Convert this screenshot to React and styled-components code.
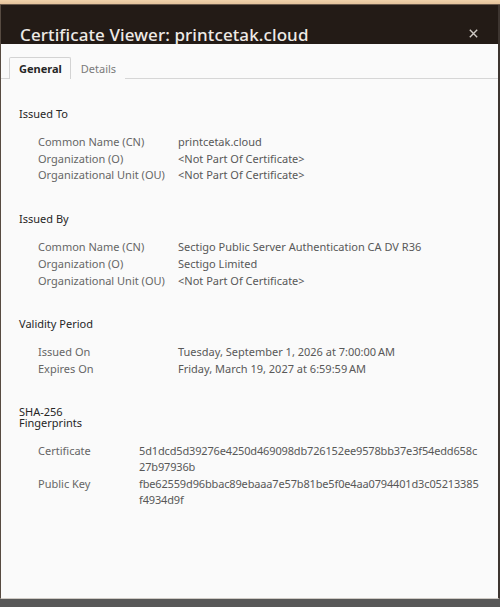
import React from "react";
import styled, { createGlobalStyle } from "styled-components";

const Global = createGlobalStyle`
  html, body { margin: 0; padding: 0; background: #585858; }
  * { box-sizing: border-box; }
`;

const Frame = styled.div`
  width: 500px;
  height: 607px;
  display: flex;
  flex-direction: column;
  background: #585858;
  font-family: "Noto Sans", "Open Sans", sans-serif;
`;

const TopStrip = styled.div`
  height: 5px;
  background: linear-gradient(#f0d2ab, #e4c29b);
  border-bottom: 1px solid #6b5a4b;
  flex: none;
`;

const Window = styled.div`
  flex: none;
  height: 594px;
  display: flex;
  flex-direction: column;
  border-left: 1px solid #574b41;
  border-right: 2px solid #3d3530;
  border-bottom: 1px solid #cfcac4;
`;

const TitleBar = styled.div`
  height: 39px;
  flex: none;
  background: #231b16;
  display: flex;
  align-items: flex-end;
  justify-content: space-between;
  padding: 0 20px 0 19px;
`;

const Title = styled.h1`
  margin: 0;
  font-size: 17px;
  font-weight: 500;
  color: #eeeae6;
  line-height: 18px;
  letter-spacing: 0.1px;
`;

const CloseButton = styled.button`
  border: none;
  background: none;
  padding: 0;
  margin-bottom: 6px;
  width: 9px;
  height: 9px;
  display: flex;
  color: #cfcac5;
`;

const Body = styled.div`
  flex: 1;
  background: #fafafa;
  display: flex;
  flex-direction: column;
`;

const TabBar = styled.div`
  display: flex;
  padding: 13px 0 0 8px;
  border-bottom: 1px solid #d6d6d6;
`;

const Tab = styled.div`
  height: 22px;
  padding: 0 8px 0 9px;
  display: flex;
  align-items: center;
  font-size: 11px;
  font-weight: ${(p) => (p.$active ? 700 : 400)};
  color: ${(p) => (p.$active ? "#262626" : "#7a7a7a")};
  border: 1px solid ${(p) => (p.$active ? "#d3d3d3" : "transparent")};
  border-bottom: none;
  border-radius: 2px 2px 0 0;
  margin-bottom: -1px;
  background: #fafafa;
`;

const Content = styled.div`
  display: flex;
  flex-direction: column;
  padding: 26px 0 0 18px;
  gap: 26px;
`;

const Section = styled.section`
  display: flex;
  flex-direction: column;
  gap: ${(p) => (p.$tight ? 14 : 12)}px;
`;

const Heading = styled.h2`
  margin: 0;
  font-size: 11px;
  font-weight: 400;
  color: #262626;
  line-height: ${(p) => (p.$tight ? "11.5px" : "17px")};
  max-width: ${(p) => (p.$tight ? "70px" : "none")};
  padding-top: ${(p) => (p.$tight ? 2 : 0)}px;
`;

const Rows = styled.div`
  display: grid;
  grid-template-columns: ${(p) => p.$labelWidth}px 1fr;
  padding-left: 19px;
  font-size: 11px;
  line-height: ${(p) => (p.$tight ? "16.5px" : "16.7px")};
`;

const Label = styled.div`
  color: #666666;
`;

const Value = styled.div`
  color: #585858;
  letter-spacing: ${(p) => (p.$compact ? "-0.15px" : "normal")};
`;

const Line = styled.span`
  display: block;
`;

const CloseIcon = () => (
  <svg width="9" height="9" viewBox="0 0 9 9">
    <path d="M0.8 0.8 L8.2 8.2 M8.2 0.8 L0.8 8.2" stroke="currentColor" strokeWidth="1.4" />
  </svg>
);

const NP = "<Not Part Of Certificate>";

const sections = [
  {
    title: "Issued To",
    labelWidth: 140,
    rows: [
      ["Common Name (CN)", ["printcetak.cloud"]],
      ["Organization (O)", [NP]],
      ["Organizational Unit (OU)", [NP]],
    ],
  },
  {
    title: "Issued By",
    labelWidth: 140,
    rows: [
      ["Common Name (CN)", ["Sectigo Public Server Authentication CA DV R36"]],
      ["Organization (O)", ["Sectigo Limited"]],
      ["Organizational Unit (OU)", [NP]],
    ],
  },
  {
    title: "Validity Period",
    labelWidth: 140,
    rows: [
      ["Issued On", ["Tuesday, September 1, 2026 at 7:00:00\u202FAM"]],
      ["Expires On", ["Friday, March 19, 2027 at 6:59:59\u202FAM"]],
    ],
  },
  {
    title: "SHA-256 Fingerprints",
    tight: true,
    labelWidth: 101,
    rows: [
      ["Certificate", ["5d1dcd5d39276e4250d469098db726152ee9578bb37e3f54edd658c", "27b97936b"]],
      ["Public Key", ["fbe62559d96bbac89ebaaa7e57b81be5f0e4aa0794401d3c05213385", "f4934d9f"]],
    ],
  },
];

export default function App() {
  return (
    <>
      <Global />
      <Frame>
        <TopStrip />
        <Window>
          <TitleBar>
            <Title>Certificate Viewer: printcetak.cloud</Title>
            <CloseButton aria-label="Close">
              <CloseIcon />
            </CloseButton>
          </TitleBar>
          <Body>
            <TabBar>
              <Tab $active>General</Tab>
              <Tab>Details</Tab>
            </TabBar>
            <Content>
              {sections.map((s) => (
                <Section key={s.title} $tight={s.tight}>
                  <Heading $tight={s.tight}>{s.title}</Heading>
                  <Rows $labelWidth={s.labelWidth} $tight={s.tight}>
                    {s.rows.map(([label, lines]) => (
                      <React.Fragment key={label}>
                        <Label>{label}</Label>
                        <Value $compact={s.tight}>
                          {lines.map((l) => (
                            <Line key={l}>{l}</Line>
                          ))}
                        </Value>
                      </React.Fragment>
                    ))}
                  </Rows>
                </Section>
              ))}
            </Content>
          </Body>
        </Window>
      </Frame>
    </>
  );
}
